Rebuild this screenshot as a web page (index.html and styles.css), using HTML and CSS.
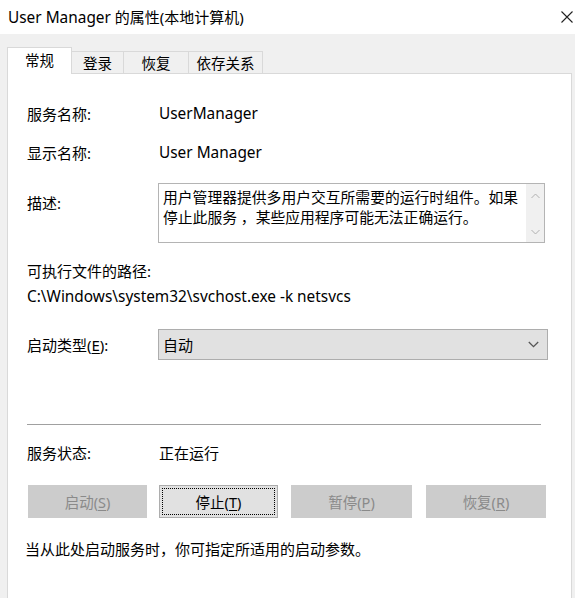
FILE: index.html
```html
<!DOCTYPE html>
<html lang="zh-CN">
<head>
<meta charset="utf-8">
<title>User Manager 的属性(本地计算机)</title>
<link rel="stylesheet" href="styles.css">
</head>
<body>
<div class="window">
  <div class="titlebar">
    <span class="title"><span class="lat">User Manager</span> 的属性(本地计算机)</span>
    <svg class="close" width="12" height="12" viewBox="0 0 12 12"><path d="M0.5 0.5 L11.5 11.5 M11.5 0.5 L0.5 11.5" stroke="#222" stroke-width="1.1" fill="none"/></svg>
  </div>
  <div class="body">
    <div class="tabs">
      <div class="tab active">常规</div>
      <div class="tab t2">登录</div>
      <div class="tab t3">恢复</div>
      <div class="tab t4">依存关系</div>
    </div>
    <div class="panel">
      <div class="row r1"><span class="label">服务名称:</span><span class="value lat">UserManager</span></div>
      <div class="row r2"><span class="label">显示名称:</span><span class="value lat">User Manager</span></div>
      <div class="row r3">
        <span class="label desc-label">描述:</span>
        <div class="textbox">
          <div class="tb-text">用户管理器提供多用户交互所需要的运行时组件。如果停止此服务 ，某些应用程序可能无法正确运行。</div>
          <div class="scroll">
            <svg width="9" height="6" viewBox="0 0 9 6"><path d="M0.5 5 L4.5 1 L8.5 5" stroke="#b0b0b0" stroke-width="1" fill="none"/></svg>
            <svg width="9" height="6" viewBox="0 0 9 6"><path d="M0.5 1 L4.5 5 L8.5 1" stroke="#b0b0b0" stroke-width="1" fill="none"/></svg>
          </div>
        </div>
      </div>
      <div class="path-label">可执行文件的路径:</div>
      <div class="path lat">C:\Windows\system32\svchost.exe -k netsvcs</div>
      <div class="row r4">
        <span class="label">启动类型(<u>E</u>):</span>
        <div class="select"><span>自动</span>
          <svg width="11" height="7" viewBox="0 0 11 7"><path d="M0.8 1 L5.5 5.6 L10.2 1" stroke="#555" stroke-width="1.3" fill="none"/></svg>
        </div>
      </div>
      <div class="sep"></div>
      <div class="row r5"><span class="label">服务状态:</span><span class="value">正在运行</span></div>
      <div class="buttons">
        <div class="btn b1 disabled">启动(<u>S</u>)</div>
        <div class="btn b2 default"><span class="focus">停止(<u>T</u>)</span></div>
        <div class="btn b3 disabled">暂停(<u>P</u>)</div>
        <div class="btn b4 disabled">恢复(<u>R</u>)</div>
      </div>
      <div class="hint">当从此处启动服务时，你可指定所适用的启动参数。</div>
    </div>
  </div>
</div>
</body>
</html>
```
FILE: styles.css
```css
* { box-sizing: border-box; }
html, body { margin: 0; padding: 0; }
body {
  width: 575px;
  height: 598px;
  overflow: hidden;
  background: #ffffff;
  font-family: "Noto Sans", "Noto Sans CJK SC", sans-serif;
  font-size: 15px;
  color: #000;
}
.lat { font-size: 15.4px; }
.window { width: 575px; height: 598px; display: flex; flex-direction: column; }
.titlebar {
  height: 34px;
  display: flex;
  align-items: center;
  justify-content: space-between;
  padding: 0 2px 0 8px;
  background: #fff;
}
.title { font-size: 15px; color: #000; }
.close { margin-top: -1px; }
.body {
  flex: 1;
  background: #f0f0f0;
  padding: 13px 3px 0 7px;
  display: flex;
  flex-direction: column;
}
.tabs { display: flex; height: 26px; align-items: flex-end; position: relative; z-index: 1; }
.tab {
  height: 22px;
  border: 1px solid #d9d9d9;
  border-bottom: none;
  background: #f0f0f0;
  display: flex;
  align-items: center;
  justify-content: center;
  font-size: 14.5px;
  margin-left: -1px;
}
.tab.active {
  height: 27px;
  margin-bottom: -1px;
  background: #fff;
  width: 65px;
  margin-left: 0;
  padding-bottom: 3px;
}
.t2 { width: 52px; margin-left: 0; border-left: none; }
.t3 { width: 66px; }
.t4 { width: 75px; }
.panel {
  flex: 1;
  background: #fff;
  border: 1px solid #d9d9d9;
  border-bottom: none;
  padding: 0 0 0 19px;
}
.row { display: flex; align-items: center; }
.label { width: 132px; flex: none; }
.r1 { margin-top: 28px; height: 22px; }
.r2 { margin-top: 17px; height: 22px; }
.r3 { margin-top: 20px; align-items: flex-start; }
.desc-label { margin-top: 9px; }
.textbox {
  margin-left: -1px;
  width: 387px;
  height: 60px;
  border: 1px solid #b4b4b4;
  display: flex;
  justify-content: space-between;
}
.tb-text {
  padding: 3px 0 0 4px;
  line-height: 20px;
  width: 365px;
  font-size: 14.8px;
}
.scroll {
  width: 18px;
  background: #f0f0f0;
  display: flex;
  flex-direction: column;
  align-items: center;
  justify-content: space-between;
  padding: 9px 0 7px;
}
.path-label { margin-top: 17px; height: 22px; line-height: 22px; }
.path { margin-top: 4px; height: 22px; line-height: 22px; }
.r4 { margin-top: 21px; }
.select {
  margin-left: -1px;
  width: 390px;
  height: 31px;
  background: #e1e1e1;
  border: 1px solid #adadad;
  display: flex;
  align-items: center;
  justify-content: space-between;
  padding: 0 8px 0 4px;
}
.sep { margin-top: 64px; width: 514px; height: 1px; background: #a0a0a0; }
.r5 { margin-top: 16px; height: 22px; }
.buttons { display: flex; margin-top: 22px; }
.btn {
  height: 33px;
  display: flex;
  align-items: center;
  justify-content: center;
  font-size: 14.5px;
}
.btn.disabled { background: #cccccc; color: #8a8a8a; border: 1px solid #cccccc; }
.b1 { margin-left: 1px; width: 119px; }
.b2 { margin-left: 12px; width: 119px; }
.b3 { margin-left: 13px; width: 121px; }
.b4 { margin-left: 14px; width: 120px; }
.btn.default { background: #e1e1e1; border: 1px solid #adadad; padding: 2px; }
.focus {
  width: 100%;
  height: 100%;
  border: 1px dotted #000;
  display: flex;
  align-items: center;
  justify-content: center;
}
u { text-decoration: underline; text-underline-offset: 2px; }
.hint { margin-top: 20px; margin-left: -2px; height: 22px; line-height: 22px; }
```
